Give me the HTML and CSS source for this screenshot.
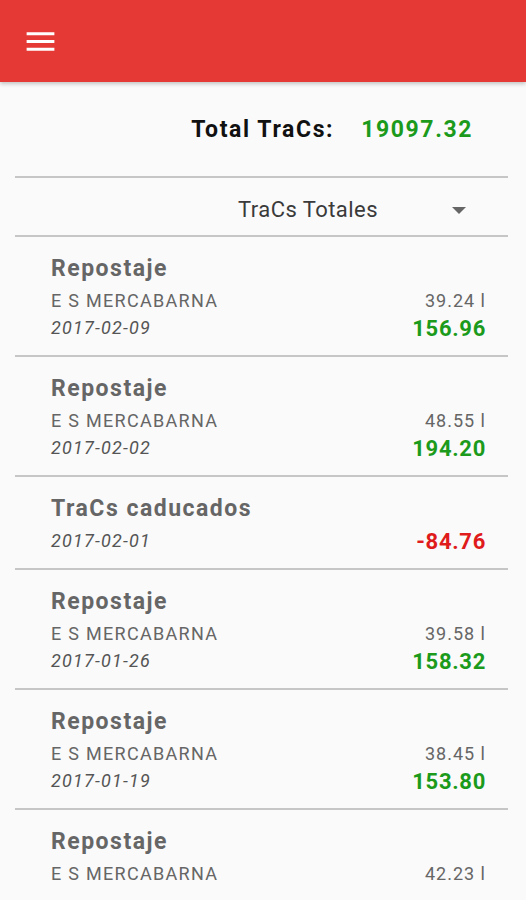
FILE: index.html
```html
<!DOCTYPE html>
<html lang="es">
<head>
  <meta charset="UTF-8" />
  <meta name="viewport" content="width=device-width, initial-scale=1.0"/>
  <title>TraCs</title>
  <link rel="stylesheet" href="styles.css">
</head>
<body>
  <!-- Toolbar -->
  <header class="toolbar">
    <svg class="menu-icon" viewBox="0 0 24 24" aria-label="Menu">
      <path d="M3 18h18v-2H3v2zm0-5h18v-2H3v2zm0-7v2h18V6H3z" fill="#fff"/>
    </svg>
  </header>

  <main class="content">
    <!-- Total -->
    <div class="total">
      <span class="total-label">Total TraCs:</span>
      <span class="total-value">19097.32</span>
    </div>

    <!-- Filter spinner -->
    <div class="filter">
      <span class="filter-text">TraCs Totales</span>
      <span class="filter-arrow"></span>
    </div>

    <!-- Movements (last one is cut by the bottom of the screen) -->
    <div class="list">
      <div class="item">
        <div class="item-left">
          <div class="item-title">Repostaje</div>
          <div class="item-sub">E S MERCABARNA</div>
          <div class="item-date">2017-02-09</div>
        </div>
        <div class="item-right">
          <div class="item-liters">39.24 l</div>
          <div class="item-amount">156.96</div>
        </div>
      </div>

      <div class="item">
        <div class="item-left">
          <div class="item-title">Repostaje</div>
          <div class="item-sub">E S MERCABARNA</div>
          <div class="item-date">2017-02-02</div>
        </div>
        <div class="item-right">
          <div class="item-liters">48.55 l</div>
          <div class="item-amount">194.20</div>
        </div>
      </div>

      <div class="item">
        <div class="item-left">
          <div class="item-title">TraCs caducados</div>
          <div class="item-date">2017-02-01</div>
        </div>
        <div class="item-right">
          <div class="item-amount negative">-84.76</div>
        </div>
      </div>

      <div class="item">
        <div class="item-left">
          <div class="item-title">Repostaje</div>
          <div class="item-sub">E S MERCABARNA</div>
          <div class="item-date">2017-01-26</div>
        </div>
        <div class="item-right">
          <div class="item-liters">39.58 l</div>
          <div class="item-amount">158.32</div>
        </div>
      </div>

      <div class="item">
        <div class="item-left">
          <div class="item-title">Repostaje</div>
          <div class="item-sub">E S MERCABARNA</div>
          <div class="item-date">2017-01-19</div>
        </div>
        <div class="item-right">
          <div class="item-liters">38.45 l</div>
          <div class="item-amount">153.80</div>
        </div>
      </div>

      <div class="item">
        <div class="item-left">
          <div class="item-title">Repostaje</div>
          <div class="item-sub">E S MERCABARNA</div>
        </div>
        <div class="item-right">
          <div class="item-liters">42.23 l</div>
        </div>
      </div>
    </div>
  </main>
</body>
</html>
```

FILE: styles.css
```css
* {
  margin: 0;
  padding: 0;
  box-sizing: border-box;
  font-family: Roboto, 'Noto Sans', sans-serif;
}

body {
  background-color: #fafafa;
  height: 900px;
  overflow: hidden;
}

/* Red app bar */
.toolbar {
  height: 82px;
  background-color: #e53935;
  display: flex;
  align-items: center;
  padding-left: 22px;
  box-shadow: 0 2px 4px rgba(0, 0, 0, 0.22);
  position: relative;
  z-index: 1;
}

.menu-icon {
  width: 37px;
  height: 37px;
}

.content {
  margin: 0 18px 0 15px;
}

/* Total line */
.total {
  display: flex;
  justify-content: flex-end;
  gap: 27px;
  padding: 33px 35px 31px 0;
  border-bottom: 2px solid #c6c6c6;
  font-size: 23px;
  line-height: 30px;
  font-weight: 700;
  letter-spacing: 1.6px;
}

.total-label {
  color: #111;
}

.total-value {
  color: #1c9a1c;
}

/* Spinner */
.filter {
  display: flex;
  justify-content: flex-end;
  align-items: center;
  padding: 18px 42px 11px 0;
  border-bottom: 2px solid #c6c6c6;
}

.filter-text {
  font-size: 22px;
  line-height: 28px;
  letter-spacing: 0.45px;
  color: #3a3a3a;
}

.filter-arrow {
  margin-left: 74px;
  margin-top: 1px;
  width: 0;
  height: 0;
  border-left: 7px solid transparent;
  border-right: 7px solid transparent;
  border-top: 7px solid #666;
}

/* List */
.list {
  height: 651px;
  overflow: hidden;
}

.item {
  display: flex;
  justify-content: space-between;
  padding: 17px 22px 11px 36px;
  border-bottom: 2px solid #c6c6c6;
}

.item-title {
  font-size: 23px;
  line-height: 30px;
  font-weight: 700;
  letter-spacing: 1.5px;
  color: #666;
  margin-bottom: 3px;
}

.item-sub {
  font-size: 18px;
  line-height: 27px;
  letter-spacing: 1.3px;
  color: #666;
}

.item-date {
  font-size: 18px;
  line-height: 27px;
  letter-spacing: 1.2px;
  font-style: italic;
  color: #555;
}

.item-right {
  margin-top: 33px;
  text-align: right;
}

.item-liters {
  font-size: 18px;
  line-height: 27px;
  letter-spacing: 1px;
  color: #666;
}

.item-amount {
  font-size: 22px;
  line-height: 30px;
  font-weight: 700;
  letter-spacing: 0.7px;
  color: #1c9a1c;
}

.item-amount.negative {
  color: #e01b1b;
}
```
